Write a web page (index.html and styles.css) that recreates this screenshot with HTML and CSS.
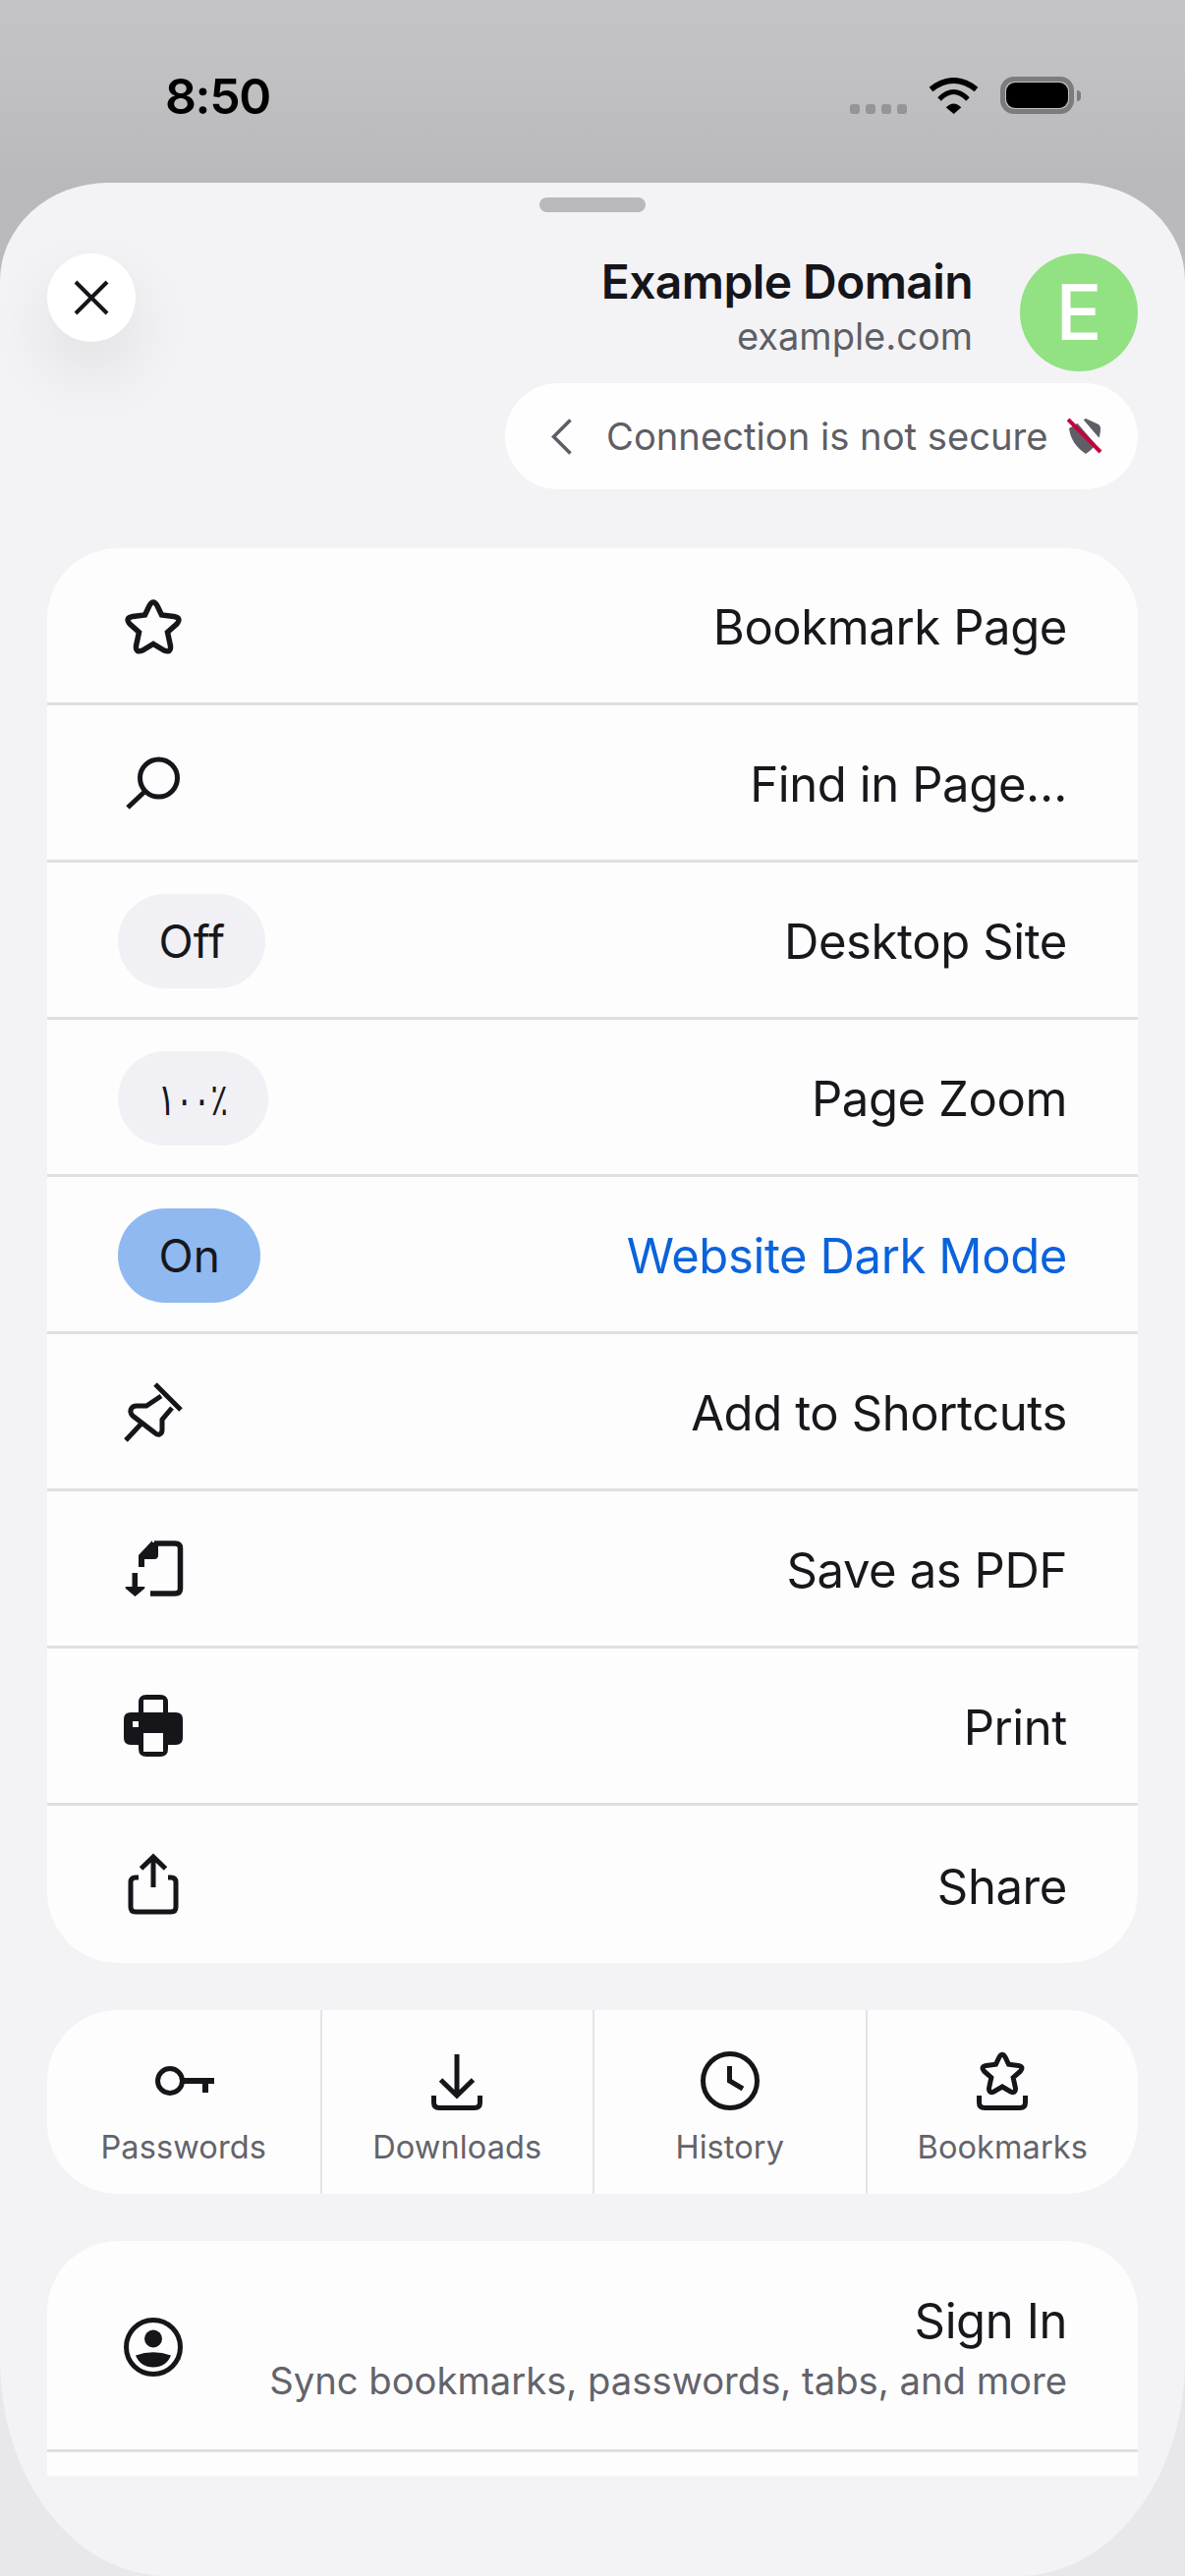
FILE: index.html
```html
<!DOCTYPE html>
<html lang="en">
<head>
<meta charset="utf-8">
<title>Site menu</title>
<link rel="stylesheet" href="styles.css">
</head>
<body>
<div class="screen">
  <div class="status">
    <span class="clock">8:50</span>
    <div class="status-icons">
      <div class="dots"><i></i><i></i><i></i><i></i></div>
      <svg class="wifi" width="51" height="37" viewBox="0 0 51 37"><path d="M2.5 12Q25.5-6 48.5 12" fill="none" stroke="#000" stroke-width="6"/><path d="M11 22Q25.5 7 40 22" fill="none" stroke="#000" stroke-width="5"/><path d="M17.7 30.3Q25.7 22.5 33.3 30.3L25.7 37Z"/></svg>
      <div class="battery"><div class="battery-body"><div class="battery-fill"></div></div><div class="battery-nub"></div></div>
    </div>
  </div>
  <div class="sheet">
    <div class="handle"></div>
    <div class="header">
      <button class="close"><svg width="36" height="36" viewBox="0 0 36 36"><path d="M2 2L34 34M34 2L2 34" fill="none" stroke="#15151a" stroke-width="4"/></svg></button>
      <div class="site">
        <div class="site-top">
          <div class="site-names">
            <div class="site-title">Example Domain</div>
            <div class="site-url">example.com</div>
          </div>
          <div class="avatar">E</div>
        </div>
        <div class="conn">
          <svg width="21" height="37" viewBox="0 0 21 37"><path d="M19.5 1.5L2.5 18.500L19.500 35.500" fill="none" stroke="#5e5e66" stroke-width="3.600"/></svg>
          <span class="conn-text">Connection is not secure</span>
          <svg width="36" height="38" viewBox="0 0 36 38"><path d="M19 1L31 6.500Q34 8 34 11Q34 27 19 37Q4 27 2 11Z" fill="#5e5e66"/><path d="M5 0L36 36" stroke="#fff" stroke-width="7" transform="translate(3 -2.500)"/><path d="M1 2L34 35" stroke="#c8003c" stroke-width="4"/></svg>
        </div>
      </div>
    </div>

    <div class="card menu">
      <div class="row">
        <svg class="ico" width="90" height="90" viewBox="0 0 90 90"><path class="ln" stroke-width="5.500" d="M41 24.500Q45 17.500 49 24.500L53.500 34L66 35.500Q74 37 69 43L59.500 51.500L62.500 65.500Q63 73 56 70L45 63.500L34 70Q27 73 27.500 65.500L30.500 51.500L21 43Q16 37 24 35.500L36.500 34Z"/></svg>
        <span class="label">Bookmark Page</span>
      </div>
      <div class="row">
        <svg class="ico" width="90" height="90" viewBox="0 0 90 90"><circle class="ln" cx="50.500" cy="40" r="19" stroke-width="5"/><path class="ln" stroke-width="5" d="M19 70L36 54"/></svg>
        <span class="label">Find in Page…</span>
      </div>
      <div class="row">
        <span class="chip">Off</span>
        <span class="label">Desktop Site</span>
      </div>
      <div class="row">
        <span class="chip chip-pct" dir="ltr"><span class="pct">١٠٠٪</span></span>
        <span class="label">Page Zoom</span>
      </div>
      <div class="row">
        <span class="chip chip-on">On</span>
        <span class="label label-on">Website Dark Mode</span>
      </div>
      <div class="row">
        <svg class="ico" width="90" height="90" viewBox="0 0 90 90"><path class="ln" stroke-width="5" d="M47 17L73 43M17 74L32 58M53 29L38 39H28C22 39 20 45 24 49L46 66C50 70 54 68 54 63V53L64 41"/></svg>
        <span class="label">Add to Shortcuts</span>
      </div>
      <div class="row">
        <svg class="ico" width="90" height="90" viewBox="0 0 90 90"><path class="ln" stroke-width="5.500" d="M42 70H67Q72.500 70 72.500 65V24Q72.500 19 67 19H46"/><path class="fl" d="M44 16L30 31V43H36V35H46Q50 35 50 31V18H44ZM23.500 49H29V63H36Q37 64 36 65L26.500 73L17 65Q16 64 17 63H23.500Z"/></svg>
        <span class="label">Save as PDF</span>
      </div>
      <div class="row">
        <svg class="ico" width="90" height="90" viewBox="0 0 90 90"><path class="fl" d="M22 31H30V21Q30 13 38 13H52Q60 13 60 21V31H68Q75 31 75 38V57Q75 64 68 64H60V68Q60 76 52 76H38Q30 76 30 68V64H22Q15 64 15 57V38Q15 31 22 31Z"/><path class="wh" d="M35 18H55V31H35ZM35 52H55V71H35ZM24 40H30V46H24Z"/></svg>
        <span class="label">Print</span>
      </div>
      <div class="row">
        <svg class="ico" width="90" height="90" viewBox="0 0 90 90"><path class="ln" stroke-width="5" d="M30 38H27Q22 38 22 43V68Q22 73 27 73H63Q68 73 68 68V43Q68 38 63 38H60M45 48V19M32.500 29L45 17L57.500 29"/></svg>
        <span class="label">Share</span>
      </div>
    </div>

    <div class="card tools">
      <div class="tool">
        <svg width="90" height="70" viewBox="0 0 90 70"><circle class="ln" cx="31" cy="33" r="12.500" stroke-width="5"/><path class="fl" d="M44 30H76V36H70V45H64V36H44Z"/></svg>
        <span class="tool-label">Passwords</span>
      </div>
      <div class="tool">
        <svg width="90" height="70" viewBox="0 0 90 70"><path class="ln" stroke-width="5" d="M45 6V47M28.500 32L45 48L61.500 32M21.500 48V55Q21.500 60.500 27 60.500H63Q68.500 60.500 68.500 55V48"/></svg>
        <span class="tool-label">Downloads</span>
      </div>
      <div class="tool">
        <svg width="90" height="70" viewBox="0 0 90 70"><circle class="ln" cx="45" cy="33" r="27.500" stroke-width="5"/><path class="ln" stroke-width="5" d="M44.500 18V33L58 41"/></svg>
        <span class="tool-label">History</span>
      </div>
      <div class="tool">
        <svg width="90" height="70" viewBox="0 0 90 70"><g transform="translate(45 25.500) scale(.77) translate(-45 -46)"><path class="ln" stroke-width="6.500" d="M41 24.500Q45 17.500 49 24.500L53.500 34L66 35.500Q74 37 69 43L59.500 51.500L62.500 65.500Q63 73 56 70L45 63.500L34 70Q27 73 27.500 65.500L30.500 51.500L21 43Q16 37 24 35.500L36.500 34Z"/></g><path class="ln" stroke-width="5" d="M21.500 48V55Q21.500 60.500 27 60.500H63Q68.500 60.500 68.500 55V48"/></svg>
        <span class="tool-label">Bookmarks</span>
      </div>
    </div>

    <div class="card account">
      <div class="signin">
        <svg class="ico ico-profile" width="90" height="90" viewBox="0 0 90 90"><circle class="ln" cx="45" cy="45" r="27.500" stroke-width="5"/><circle class="fl" cx="45" cy="36.500" r="9"/><path class="fl" d="M27 53.500Q45 47 63 53.500Q58 65.500 45 65.500Q32 65.500 27 53.500Z"/></svg>
        <div class="signin-text">
          <div class="label">Sign In</div>
          <div class="signin-sub">Sync bookmarks, passwords, tabs, and more</div>
        </div>
      </div>
    </div>
  </div>
</div>
</body>
</html>
```

FILE: styles.css
```css
* { box-sizing: border-box; }
html, body { margin: 0; padding: 0; }
body {
  width: 1206px;
  height: 2622px;
  overflow: hidden;
  font-family: Inter, "Noto Sans", "DejaVu Sans", sans-serif;
  color: #17171c;
}
.screen {
  width: 1206px;
  height: 2622px;
  display: flex;
  flex-direction: column;
  background: linear-gradient(180deg, #c4c4c6 0, #c1c1c3 70px, #b9b9bb 186px, #bcbcbe 340px, #e8e8ea 2300px, #e8e8ea 100%);
}
.status {
  height: 186px;
  flex: none;
  display: flex;
  justify-content: space-between;
  padding: 0 106px 0 168px;
}
.clock {
  margin-top: 68px;
  font-size: 50px;
  line-height: 60px;
  font-weight: 600;
  color: #000;
  letter-spacing: -1.4px;
}
.status-icons {
  display: flex;
  align-items: flex-start;
  padding-top: 78px;
}
.dots {
  display: flex;
  gap: 6px;
  margin-top: 28px;
  margin-right: 22px;
}
.dots i {
  width: 10px;
  height: 10px;
  border-radius: 3px;
  background: #959597;
}
.wifi { margin-top: 1px; margin-right: 22px; }
.battery { display: flex; align-items: center; }
.battery-body {
  width: 75px;
  height: 38px;
  border: 5px solid #7c7c7e;
  border-radius: 14px;
  padding: 1px;
}
.battery-fill {
  width: 100%;
  height: 100%;
  background: #000;
  border-radius: 9px;
}
.battery-nub {
  width: 4px;
  height: 11px;
  margin-left: 3px;
  background: #7c7c7e;
  border-radius: 0 4px 4px 0;
}

.sheet {
  flex: 1;
  min-height: 0;
  display: flex;
  flex-direction: column;
  padding: 15px 48px 0;
  background: #f3f3f6;
  border-radius: 110px 110px 170px 170px / 100px 100px 220px 220px;
}
.handle {
  flex: none;
  width: 108px;
  height: 15px;
  margin: 0 auto;
  border-radius: 8px;
  background: #b8b8bd;
}
.header {
  margin-top: 42px;
  display: flex;
  justify-content: space-between;
  align-items: flex-start;
}
.close {
  width: 90px;
  height: 90px;
  padding: 0;
  border: 0;
  border-radius: 50%;
  background: #fff;
  display: flex;
  align-items: center;
  justify-content: center;
  box-shadow: 0 30px 70px rgba(0, 0, 0, .09);
}
.site {
  display: flex;
  flex-direction: column;
  align-items: flex-end;
}
.site-top { display: flex; gap: 48px; }
.site-names { text-align: right; padding-top: 2px; }
.site-title {
  font-size: 48px;
  line-height: 54px;
  font-weight: 600;
  letter-spacing: -.6px;
  color: #15151a;
}
.site-url {
  margin-top: 3px;
  font-size: 38px;
  line-height: 50px;
  color: #5e5e66;
}
.avatar {
  width: 120px;
  height: 120px;
  border-radius: 50%;
  background: #92e182;
  color: #fff;
  font-size: 78px;
  font-weight: 500;
  line-height: 120px;
  text-align: center;
}
.conn {
  margin-top: 12px;
  height: 108px;
  width: 644px;
  border-radius: 54px;
  background: #fefefe;
  display: flex;
  align-items: center;
  padding-left: 47px;
}
.conn-text {
  margin-left: 35px;
  margin-right: 19px;
  font-size: 38.200px;
  color: #5e5e66;
  white-space: nowrap;
}

.card { background: #fdfdfe; flex: none; }
.menu {
  margin-top: 60px;
  border-radius: 72px;
}
.row {
  height: 160px;
  display: flex;
  align-items: center;
  justify-content: space-between;
  padding: 0 72px 0 63px;
  border-bottom: 3px solid #dfdfe4;
}
.row:last-child { border-bottom: 0; }
.ico { display: block; flex: none; }
.ln { fill: none; stroke: #15151a; }
.fl { fill: #15151a; }
.wh { fill: #fdfdfe; }
.label {
  font-size: 49px;
  line-height: 58px;
  letter-spacing: -.4px;
  color: #17171c;
}
.row .label { padding-top: 5px; }
.label-on { color: #0b63dc; }
.chip {
  margin-left: 9px;
  margin-top: 2px;
  height: 96px;
  padding: 0 41.500px;
  border-radius: 48px;
  background: #f0f0f5;
  font-size: 46px;
  line-height: 96px;
  color: #17171c;
}
.chip-pct {
  width: 153px;
  padding: 0;
  text-align: center;
}
.pct {
  display: inline-block;
  transform: scaleX(.72);
}
.chip-on { background: #8fb9f0; }

.tools {
  margin-top: 48px;
  height: 187px;
  border-radius: 72px;
  display: grid;
  grid-template-columns: repeat(4, 1fr);
  overflow: hidden;
}
.tool {
  display: flex;
  flex-direction: column;
  align-items: center;
  padding-top: 39px;
  border-left: 2px solid #e4e4e8;
}
.tool:first-child { border-left: 0; }
.tool-label {
  margin-top: 9px;
  font-size: 32.500px;
  line-height: 44px;
  letter-spacing: .1px;
  color: #63636b;
}

.account {
  margin-top: 48px;
  height: 239px;
  border-radius: 72px 72px 0 0;
}
.signin {
  height: 215px;
  display: flex;
  align-items: center;
  justify-content: space-between;
  padding: 0 72px 0 63px;
  border-bottom: 3px solid #dfdfe4;
}
.ico-profile { margin-top: 3px; }
.signin-text { text-align: right; padding-top: 8px; }
.signin-sub {
  margin-top: 6px;
  font-size: 38.200px;
  line-height: 50px;
  color: #63636b;
}
```
